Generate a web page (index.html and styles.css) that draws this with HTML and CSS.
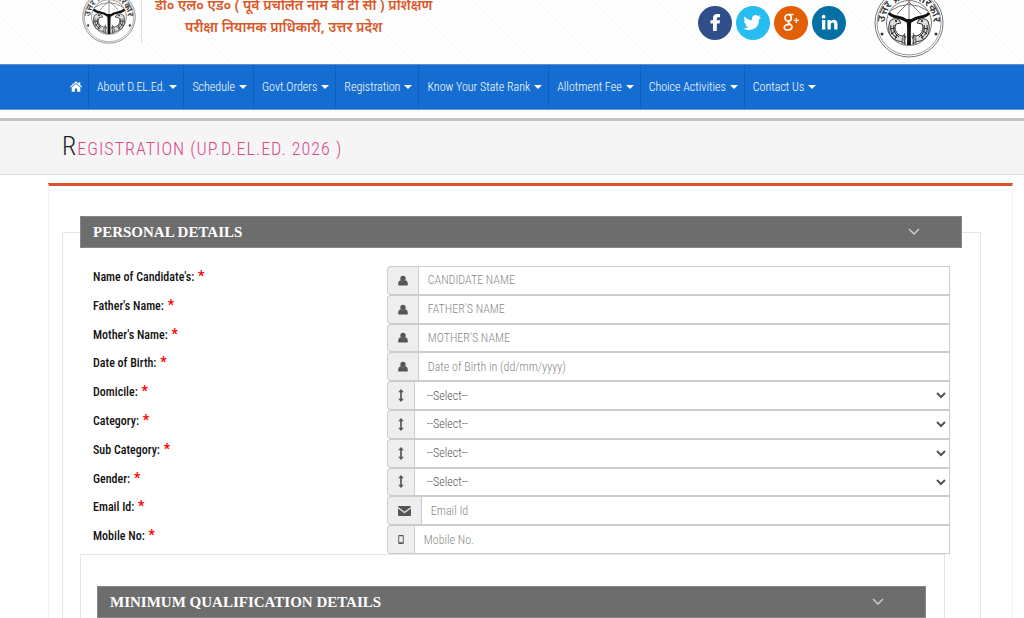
FILE: index.html
```html
<!DOCTYPE html>
<html lang="en">
<head>
    <meta charset="UTF-8">
    <meta name="viewport" content="width=device-width, initial-scale=1.0">
    <title>UP D.El.Ed. Registration</title>
    <link rel="stylesheet" href="styles.css">
</head>
<body>

    <!-- shared icons -->
    <svg class="defs" width="0" height="0">
        <symbol id="emblem" viewBox="0 0 70 70">
            <path id="arc" d="M11 39a24.300 24.300 0 1 1 48 0" fill="none"/>
            <circle cx="35" cy="35" r="34" fill="#fff" stroke="#777" stroke-width="1"/>
            <circle cx="35" cy="35" r="32" fill="none" stroke="#999" stroke-width="1"/>
            <circle cx="35" cy="35" r="22.500" fill="none" stroke="#777" stroke-width="1"/>
            <text font-family="Noto Sans, Noto Sans Devanagari, sans-serif" font-size="11" font-weight="600" fill="#333"><textPath href="#arc" startOffset="50%" text-anchor="middle">उत्तर प्रदेश सरकार</textPath></text>
            <path d="M15 25q2 3 8 4 6 1 10 4h4q4-3 10-4 6-1 8-4" fill="none" stroke="#111" stroke-width="3"/>
            <path d="M16 23q19-13 38 0M35 12v20M23 26l12-12 12 12" fill="none" stroke="#777" stroke-width="1"/>
            <path d="M32.500 31h5q-1 8-.500 26h-4q.500-18-.500-26z" fill="#111"/>
            <g id="fish">
                <path d="M16 33q4-4 9-1l2 3-5 1q-3 6 3 11 3 2 6 0l-1 4 1 5q-3-3-7-3-7-2-9-9-1-6 1-11z" fill="#ddd" stroke="#333" stroke-width="1"/>
                <path d="M17 37q-2 8 6 13M20 37q-2 7 5 12M16 41l5-1M17 46l4-3M21 51l2-5" fill="none" stroke="#222" stroke-width="1"/>
                <path d="M28 56q-1-6 3-11M31 57q-1-5 1-9" fill="none" stroke="#555" stroke-width="1"/>
                <circle cx="22" cy="33" r="1" fill="#111"/>
            </g>
            <use href="#fish" transform="matrix(-1 0 0 1 70 0)"/>
            <circle cx="8" cy="46" r="1.500" fill="#333"/>
            <circle cx="62" cy="46" r="1.500" fill="#333"/>
        </symbol>
        <symbol id="user" viewBox="0 0 12 12">
            <circle cx="6" cy="3.500" r="3.200"/>
            <path d="M1 12q-.700 0-.800-.900Q.200 6.200 3.100 5.700 6 8.200 8.900 5.700q2.900.500 2.900 5.400-.100.900-.800.900z"/>
        </symbol>
        <symbol id="updown" viewBox="0 0 6 14">
            <path d="M3 0l3 3.500H3.900v7H6L3 14 0 10.500h2.100v-7H0z"/>
        </symbol>
        <symbol id="down" viewBox="0 0 12 8">
            <path d="M1 1l5 5 5-5" fill="none" stroke="currentColor" stroke-width="1.500"/>
        </symbol>
    </svg>

    <header class="header">
        <svg class="logo"><use href="#emblem"/></svg>
        <div class="site-name">
            <div>डी० एल० एड० ( पूर्व प्रचलित नाम बी टी सी ) प्रशिक्षण</div>
            <div class="authority">परीक्षा नियामक प्राधिकारी, उत्तर प्रदेश</div>
        </div>
        <div class="social">
            <a href="#" class="facebook" aria-label="Facebook"><svg viewBox="0 0 34 34"><path d="M15 25v-7.500h-2.500v-3.300H15v-2.100q0-4 4.200-4H22v3.200h-1.800q-1.400 0-1.400 1.300v1.600H22l-.400 3.300h-2.800V25z"/></svg></a>
            <a href="#" class="twitter" aria-label="Twitter"><svg viewBox="0 0 34 34"><path d="M25 11.500q-.700 1.300-2 2 0 10.500-10 10.500-3 0-5.500-1.500 3 .200 5-1.400-2.500-.300-3.200-2.400h1.500Q8 17.600 8 14.800l1.500.400q-2.500-2-1-4.800 3 3.500 7.500 3.700-.500-4.600 3.400-5 1.600 0 2.700 1.100l2.200-.900q-.300 1.200-1.400 2z"/></svg></a>
            <a href="#" class="google" aria-label="Google Plus"><svg viewBox="0 0 34 34"><path d="M19.500 8.500h-5q-3.500.300-3.500 3.500.300 3.300 3.900 3.100-1 1.500.500 2.600 3 1.700 2.500 4.100-.700 2.200-3.700 2.200-4 0-4-2.600.600-2.900 5.200-3M15 15.100q2.500-.400 2.300-3.300-.400-2.900-2.600-3.200" fill="none" stroke="#fff" stroke-width="1.600"/><path d="M19.800 13.800h1.900v-1.900H23v1.900h1.900v1.300H23V17h-1.300v-1.900h-1.900z"/></svg></a>
            <a href="#" class="linkedin" aria-label="LinkedIn"><svg viewBox="0 0 34 34"><path d="M10 14h3.300v9.500H10zM15.500 14h3.200v1.400q1-1.700 3-1.700 3.800 0 3.800 4.500v5.300h-3.300v-4.800q0-2.200-1.600-2.200-1.800 0-1.800 2.200v4.800h-3.300z"/><circle cx="11.600" cy="10.700" r="1.900"/></svg></a>
        </div>
        <svg class="logo-right"><use href="#emblem"/></svg>
    </header>

    <nav class="menu">
        <a href="#" aria-label="Home"><svg class="home" viewBox="0 0 14 12"><path d="M7 0l3 2.700V1h2v3.500L14 6.300l-.800.900L7 1.900.800 7.200 0 6.300zM7 3l5 4.200V12H8.300V8.300H5.700V12H2V7.200z"/></svg></a>
        <a href="#" class="drop">About D.EL.Ed.</a>
        <a href="#" class="drop">Schedule</a>
        <a href="#" class="drop">Govt.Orders</a>
        <a href="#" class="drop">Registration</a>
        <a href="#" class="drop">Know Your State Rank</a>
        <a href="#" class="drop">Allotment Fee</a>
        <a href="#" class="drop">Choice Activities</a>
        <a href="#" class="drop">Contact Us</a>
    </nav>

    <div class="title-bar">
        <h1>Registration (UP.D.EL.Ed. 2026 )</h1>
    </div>

    <form class="panel">
        <fieldset>
            <legend class="bar">PERSONAL DETAILS <svg><use href="#down"/></svg></legend>

            <div class="rows">
                <div class="row">
                    <label for="name">Name of Candidate's: <b>*</b></label>
                    <div class="group"><span class="addon"><svg class="i-user"><use href="#user"/></svg></span><input type="text" id="name" placeholder="CANDIDATE NAME"></div>
                </div>
                <div class="row">
                    <label for="father">Father's Name: <b>*</b></label>
                    <div class="group"><span class="addon"><svg class="i-user"><use href="#user"/></svg></span><input type="text" id="father" placeholder="FATHER'S NAME"></div>
                </div>
                <div class="row">
                    <label for="mother">Mother's Name: <b>*</b></label>
                    <div class="group"><span class="addon"><svg class="i-user"><use href="#user"/></svg></span><input type="text" id="mother" placeholder="MOTHER'S NAME"></div>
                </div>
                <div class="row">
                    <label for="dob">Date of Birth: <b>*</b></label>
                    <div class="group"><span class="addon"><svg class="i-user"><use href="#user"/></svg></span><input type="text" id="dob" placeholder="Date of Birth in (dd/mm/yyyy)"></div>
                </div>
                <div class="row">
                    <label for="domicile">Domicile: <b>*</b></label>
                    <div class="group"><span class="addon"><svg class="i-updown"><use href="#updown"/></svg></span><select id="domicile"><option>--Select--</option></select></div>
                </div>
                <div class="row">
                    <label for="category">Category: <b>*</b></label>
                    <div class="group"><span class="addon"><svg class="i-updown"><use href="#updown"/></svg></span><select id="category"><option>--Select--</option></select></div>
                </div>
                <div class="row">
                    <label for="subcategory">Sub Category: <b>*</b></label>
                    <div class="group"><span class="addon"><svg class="i-updown"><use href="#updown"/></svg></span><select id="subcategory"><option>--Select--</option></select></div>
                </div>
                <div class="row">
                    <label for="gender">Gender: <b>*</b></label>
                    <div class="group"><span class="addon"><svg class="i-updown"><use href="#updown"/></svg></span><select id="gender"><option>--Select--</option></select></div>
                </div>
                <div class="row">
                    <label for="email">Email Id: <b>*</b></label>
                    <div class="group"><span class="addon"><svg class="i-mail" viewBox="0 0 13 10"><path d="M1 0h11q1 0 1 1L6.500 5.800 0 1q0-1 1-1zM0 2.500l6.500 4.700L13 2.500V9q0 1-1 1H1Q0 10 0 9z"/></svg></span><input type="email" id="email" placeholder="Email Id"></div>
                </div>
                <div class="row">
                    <label for="mobile">Mobile No: <b>*</b></label>
                    <div class="group"><span class="addon"><svg class="i-phone" viewBox="0 0 6 10"><path d="M1 0h4q1 0 1 1v8q0 1-1 1H1Q0 10 0 9V1q0-1 1-1zM1 1.500v6.500h4V1.500z" fill-rule="evenodd"/></svg></span><input type="tel" id="mobile" placeholder="Mobile No."></div>
                </div>
            </div>

            <div class="qualification">
                <h2 class="bar">MINIMUM QUALIFICATION DETAILS <svg><use href="#down"/></svg></h2>
            </div>
        </fieldset>
    </form>

</body>
</html>
```
FILE: styles.css
```css
* {
    box-sizing: border-box;
}

body {
    margin: 0;
    height: 100vh;
    overflow: hidden;
    background: #fff;
    color: #111;
    font-family: "Roboto Condensed", "Liberation Sans Narrow", Roboto, sans-serif;
    font-size: 12px;
}

a {
    color: #fff;
    text-decoration: none;
}

svg {
    display: block;
    fill: currentColor;
}

.defs {
    position: absolute;
}

/* header */
.header {
    display: flex;
    align-items: flex-start;
    height: 64px;
    padding: 0 80px 0 82px;
    background: repeating-linear-gradient(45deg, #fff 0 3px, #fcfcfc 3px 5px);
}

.logo {
    width: 54px;
    height: 54px;
    margin-top: -10px;
}

.site-name {
    height: 43px;
    margin-left: 5px;
    padding-left: 13px;
    border-left: 1px solid #ddd;
    color: #d9592b;
    font-family: "Noto Sans", "Noto Sans Devanagari", sans-serif;
    font-size: 14px;
    font-weight: 600;
    line-height: 22px;
    text-align: center;
    white-space: nowrap;
}

.site-name div:first-child {
    margin-top: -6px;
}

.authority {
    padding-right: 20px;
}

.social {
    display: flex;
    gap: 4px;
    margin: 6px 28px 0 auto;
}

.social a {
    width: 34px;
    height: 34px;
    border-radius: 50%;
}

.facebook { background: #304f8a; }
.twitter { background: #27bdf0; }
.google { background: #e35f06; }
.linkedin { background: #0570a5; }

.logo-right {
    width: 70px;
    height: 70px;
    margin-top: -12px;
}

/* menu */
.menu {
    display: flex;
    height: 46px;
    padding-left: 62px;
    background: #166dd1;
    border-top: 1px solid #5b8fd0;
    border-bottom: 1px solid #5b95dd;
}

.menu a {
    display: flex;
    align-items: center;
    padding: 0 6px 1px 8px;
    border-right: 1px solid #1260bd;
    font-weight: 300;
    white-space: nowrap;
}

.menu a:last-child {
    border-right: none;
}

.home {
    width: 12px;
    height: 11px;
}

.drop::after {
    content: "";
    margin-left: 4px;
    border: 4px solid transparent;
    border-top-color: #fff;
    border-bottom: none;
}

/* page title */
.title-bar {
    margin-top: 8px;
    padding: 10px 62px;
    height: 57px;
    background: #f5f5f5;
    border-top: 3px solid #c3c3c3;
    border-bottom: 1px solid #ddd;
}

.title-bar h1 {
    margin: 0;
    color: #d9498a;
    font-size: 18px;
    font-weight: 300;
    letter-spacing: 1px;
    line-height: 30px;
    text-transform: uppercase;
}

.title-bar h1::first-letter {
    color: #222;
    font-size: 26px;
}

/* form */
.panel {
    margin: 8px 11px 0 48px;
    padding: 30px 31px 0 13px;
    border: 1px solid #f3f3f3;
    border-top: 3px solid #d9542b;
}

fieldset {
    margin: 0;
    padding: 0 18px 20px 17px;
    border: 1px solid #e5e5e5;
}

.bar {
    display: flex;
    align-items: center;
    justify-content: space-between;
    width: 100%;
    height: 32px;
    margin: 0;
    padding: 0 41px 0 12px;
    background: #6d6d6d;
    border: 1px solid #888;
    color: #fff;
    font-family: "Liberation Serif", serif;
    font-size: 15px;
    font-weight: 700;
}

.bar svg {
    width: 12px;
    height: 8px;
    color: #ccc;
}

.rows {
    display: grid;
    grid-auto-rows: 1fr;
    height: 288px;
    margin-top: 18px;
    padding: 0 12px 0 13px;
}

.row {
    display: grid;
    grid-template-columns: 12fr 23fr;
    min-height: 0;
}

.row label {
    font-weight: 500;
    line-height: 20px;
}

.row b {
    margin-left: 1px;
    color: #f00;
    font-size: 14px;
}

.group {
    display: flex;
    min-height: 0;
}

.addon {
    display: flex;
    align-items: center;
    padding: 0 10px;
    background: #eee;
    border: 1px solid #ccc;
    border-right: none;
    border-radius: 4px 0 0 4px;
    color: #555;
}

.i-user {
    width: 10px;
    height: 11px;
}

.i-updown {
    width: 6px;
    height: 13px;
}

.i-mail {
    width: 13px;
    height: 10px;
}

.i-phone {
    width: 6px;
    height: 9px;
}

input,
select {
    flex: 1;
    min-width: 0;
    height: 100%;
    padding: 0 9px;
    background: #fff;
    border: 1px solid #ccc;
    border-radius: 0;
    color: #555;
    font-family: inherit;
    font-size: 12px;
    font-weight: 300;
}

select {
    padding: 0 0 0 8px;
}

input::placeholder {
    color: #888;
}

.qualification {
    margin-right: 17px;
    padding: 31px 18px 0 16px;
    border: 1px solid #e5e5e5;
}
```
